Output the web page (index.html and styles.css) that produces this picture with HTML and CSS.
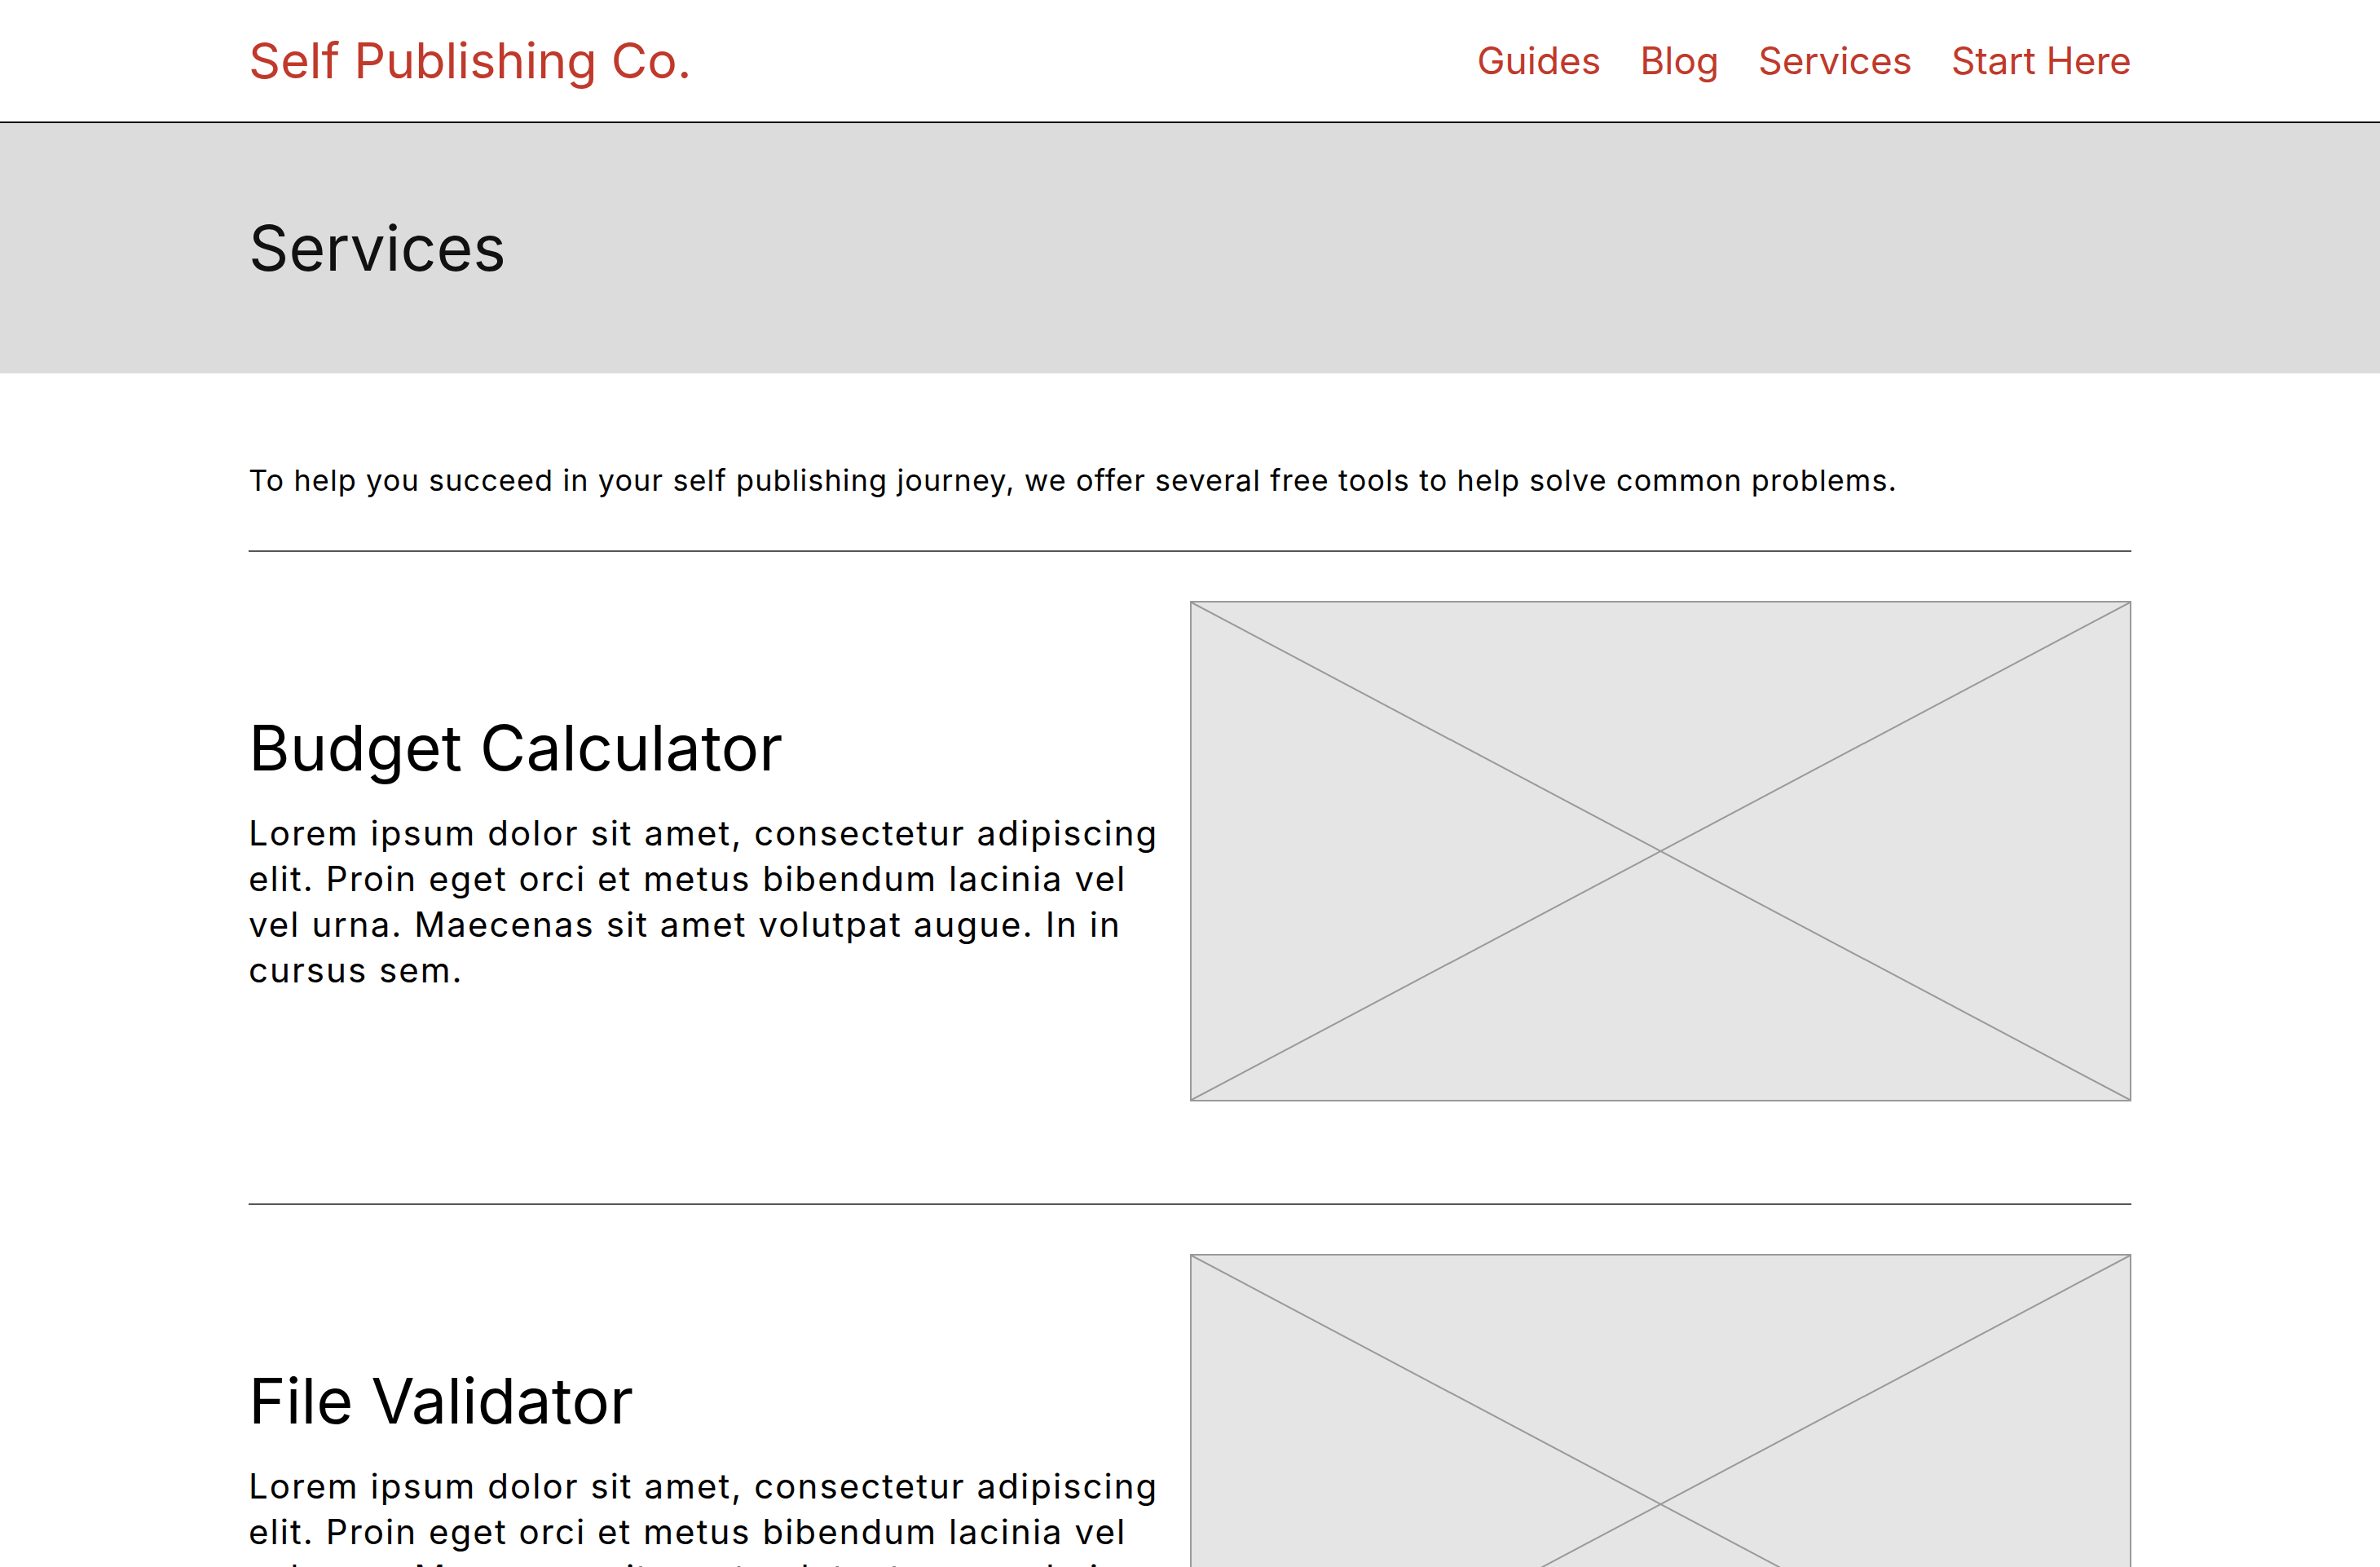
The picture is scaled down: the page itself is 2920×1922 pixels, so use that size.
FILE: index.html
```html
<!DOCTYPE html>
<html lang="en">
<head>
<meta charset="utf-8">
<title>Services - Self Publishing Co.</title>
<link rel="stylesheet" href="styles.css">
</head>
<body>
<header class="site-header">
  <div class="container header-inner">
    <a class="logo" href="#">Self Publishing Co.</a>
    <nav class="nav">
      <a href="#">Guides</a>
      <a href="#">Blog</a>
      <a href="#">Services</a>
      <a href="#">Start Here</a>
    </nav>
  </div>
</header>
<section class="hero">
  <div class="container">
    <h1 class="hero-title">Services</h1>
  </div>
</section>
<main class="container main">
  <p class="intro">To help you succeed in your self publishing journey, we offer several free tools to help solve common problems.</p>
  <hr class="rule">
  <section class="service">
    <div class="service-text">
      <h2 class="service-title">Budget Calculator</h2>
      <p class="service-desc">Lorem ipsum dolor sit amet, consectetur adipiscing elit. Proin eget orci et metus bibendum lacinia vel vel urna. Maecenas sit amet volutpat augue. In in cursus sem.</p>
    </div>
    <div class="placeholder">
      <svg viewBox="0 0 100 100" preserveAspectRatio="none"><line x1="0" y1="0" x2="100" y2="100"/><line x1="100" y1="0" x2="0" y2="100"/></svg>
    </div>
  </section>
  <hr class="rule">
  <section class="service">
    <div class="service-text">
      <h2 class="service-title">File Validator</h2>
      <p class="service-desc">Lorem ipsum dolor sit amet, consectetur adipiscing elit. Proin eget orci et metus bibendum lacinia vel vel urna. Maecenas sit amet volutpat augue. In in cursus sem.</p>
    </div>
    <div class="placeholder">
      <svg viewBox="0 0 100 100" preserveAspectRatio="none"><line x1="0" y1="0" x2="100" y2="100"/><line x1="100" y1="0" x2="0" y2="100"/></svg>
    </div>
  </section>
</main>
</body>
</html>
```

FILE: styles.css
```css
* { box-sizing: border-box; }
html, body { margin: 0; padding: 0; }
body {
  font-family: Inter, "Noto Sans", "Liberation Sans", sans-serif;
  color: #111;
  background: #fff;
}
.container {
  width: 2310px;
  margin: 0 auto;
}
.site-header {
  height: 151px;
  border-bottom: 2px solid #111;
}
.header-inner {
  height: 149px;
  display: flex;
  align-items: center;
  justify-content: space-between;
}
.logo {
  color: #c0392b;
  text-decoration: none;
  font-size: 61px;
  line-height: 1.2;
}
.nav {
  display: flex;
  gap: 48px;
}
.nav a {
  color: #c0392b;
  text-decoration: none;
  font-size: 46px;
  line-height: 1.2;
}
.hero {
  background: #dcdcdc;
  height: 307px;
  display: flex;
  align-items: center;
}
.hero-title {
  margin: 0;
  font-weight: 400;
  font-size: 77px;
  line-height: 1.2;
  color: #111;
}
.main {
  padding-bottom: 200px;
}
.intro {
  margin: 104px 0 58px;
  font-size: 36px;
  line-height: 55px;
  letter-spacing: 1.1px;
  color: #000;
}
.rule {
  border: 0;
  height: 2px;
  background: #555;
  margin: 0;
}
.service {
  display: grid;
  grid-template-columns: 1fr 1fr;
  align-items: center;
  padding: 60px 0 125px;
}
.service-text {
  padding-right: 20px;
}
.service-title {
  margin: 0 0 30px;
  font-weight: 400;
  font-size: 77.5px;
  line-height: 1.2;
  color: #000;
}
.service-desc {
  margin: 0;
  font-size: 42px;
  line-height: 56px;
  letter-spacing: 2.05px;
  color: #000;
}
.placeholder {
  height: 614px;
  background: #e5e5e5;
  border: 2px solid #9a9a9a;
}
.placeholder svg {
  display: block;
  width: 100%;
  height: 100%;
}
.placeholder line {
  stroke: #999;
  stroke-width: 2;
  vector-effect: non-scaling-stroke;
}
```
